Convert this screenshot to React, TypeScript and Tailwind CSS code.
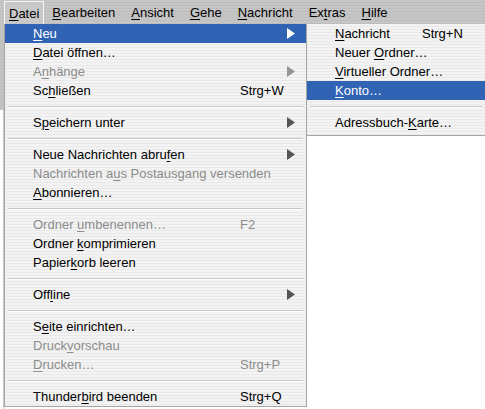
import type { ReactNode } from 'react';

type Item =
  | { sep: true }
  | {
      sep?: false;
      label: ReactNode;
      shortcut?: string;
      sub?: boolean;
      disabled?: boolean;
      active?: boolean;
    };

const STRIPES =
  'bg-[repeating-linear-gradient(to_bottom,#f3f3f3_0px,#f3f3f3_2px,#e9e9e9_2px,#e9e9e9_3px)]';

function U({ children }: { children: ReactNode }) {
  return <span className="underline underline-offset-[2px] decoration-1">{children}</span>;
}

const FILE_MENU: Item[] = [
  { label: <><U>N</U>eu</>, sub: true, active: true },
  { label: <><U>D</U>atei öffnen…</> },
  { label: <>A<U>n</U>hänge</>, sub: true, disabled: true },
  { label: <>Sc<U>h</U>ließen</>, shortcut: 'Strg+W' },
  { sep: true },
  { label: <>S<U>p</U>eichern unter</>, sub: true },
  { sep: true },
  { label: <>Neue Nachrichten abru<U>f</U>en</>, sub: true },
  { label: <>Nachrichten a<U>u</U>s Postausgang versenden</>, disabled: true },
  { label: <><U>A</U>bonnieren…</> },
  { sep: true },
  { label: <>Ordner <U>u</U>mbenennen…</>, shortcut: 'F2', disabled: true },
  { label: <>Ordner <U>k</U>omprimieren</> },
  { label: <>Papier<U>k</U>orb leeren</> },
  { sep: true },
  { label: <>Off<U>l</U>ine</>, sub: true },
  { sep: true },
  { label: <>S<U>e</U>ite einrichten…</> },
  { label: <>Druck<U>v</U>orschau</>, disabled: true },
  { label: <><U>D</U>rucken…</>, shortcut: 'Strg+P', disabled: true },
  { sep: true },
  { label: <>Thunder<U>b</U>ird beenden</>, shortcut: 'Strg+Q' },
];

const NEW_MENU: Item[] = [
  { label: <><U>N</U>achricht</>, shortcut: 'Strg+N' },
  { label: <>Neuer <U>O</U>rdner…</> },
  { label: <><U>V</U>irtueller Ordner…</> },
  { label: <><U>K</U>onto…</>, active: true },
  { sep: true },
  { label: <>Adressbuch-<U>K</U>arte…</> },
];

const MENUBAR: ReactNode[] = [
  <><U>D</U>atei</>,
  <><U>B</U>earbeiten</>,
  <><U>A</U>nsicht</>,
  <><U>G</U>ehe</>,
  <><U>N</U>achricht</>,
  <>Ex<U>t</U>ras</>,
  <><U>H</U>ilfe</>,
];

function Arrow({ color }: { color: string }) {
  return (
    <svg width="8" height="11" viewBox="0 0 8 11" className="block">
      <path d="M0 0 L8 5.5 L0 11 Z" fill={color} />
    </svg>
  );
}

function MenuRows({ items, shortcutCol, arrowCol }: { items: Item[]; shortcutCol: string; arrowCol?: boolean }) {
  return (
    <>
      {items.map((it, i) => {
        if (it.sep) {
          return (
            <div key={i} className="h-[13px] flex items-center px-[3px]">
              <div className="h-[2px] w-full border-t border-[#c6c6c6] border-b-white border-b" />
            </div>
          );
        }
        const fg = it.active ? 'text-white' : it.disabled ? 'text-[#8c8c8c]' : 'text-black';
        return (
          <div
            key={i}
            className={`h-[19px] flex items-center pl-[28px] ${it.active ? 'bg-[#3163b5]' : ''} ${fg}`}
          >
            <span className="whitespace-nowrap">{it.label}</span>
            {it.shortcut ? (
              <span className={`absolute whitespace-nowrap ${shortcutCol}`}>{it.shortcut}</span>
            ) : null}
            {arrowCol && it.sub ? (
              <span className="ml-auto mr-[11px]">
                <Arrow color={it.active ? '#ffffff' : it.disabled ? '#959595' : '#555555'} />
              </span>
            ) : null}
          </div>
        );
      })}
    </>
  );
}

export default function App() {
  return (
    <div
      className="w-[485px] h-[409px] overflow-hidden bg-white text-[13px] leading-none flex flex-col"
      style={{ fontFamily: '"Liberation Sans", Arial, sans-serif' }}
    >
      <div className="h-[24px] shrink-0 flex items-stretch bg-[repeating-linear-gradient(to_bottom,#c6c6c6_0px,#c6c6c6_2px,#bdbdbd_2px,#bdbdbd_3px)] pl-[4px]">
        {MENUBAR.map((m, i) => (
          <div
            key={i}
            className={`flex items-center px-[4px] ${
              i === 0 ? 'border border-[#f4f4f4] border-b-0 mt-[1px] mr-[4px] bg-[#c8c8c8]' : 'mr-[8px]'
            }`}
          >
            {m}
          </div>
        ))}
      </div>
      <div className="flex flex-1 items-start">
        <div className="w-[4px] self-stretch flex flex-col">
          <div className="h-[86px] bg-[#c2c2c2]" />
          <div className="flex-1 bg-white border-r border-[#c8c8c8]" />
        </div>
        <div className={`relative w-[303px] border-x border-b border-[#a4a4a4] ${STRIPES}`}>
          <div className="relative">
            <MenuRows items={FILE_MENU} shortcutCol="left-[235px]" arrowCol />
          </div>
        </div>
        <div className={`relative flex-1 border-b border-[#a4a4a4] ${STRIPES}`}>
          <MenuRows items={NEW_MENU} shortcutCol="left-[115px]" />
          <div className="h-[3px]" />
        </div>
      </div>
    </div>
  );
}
